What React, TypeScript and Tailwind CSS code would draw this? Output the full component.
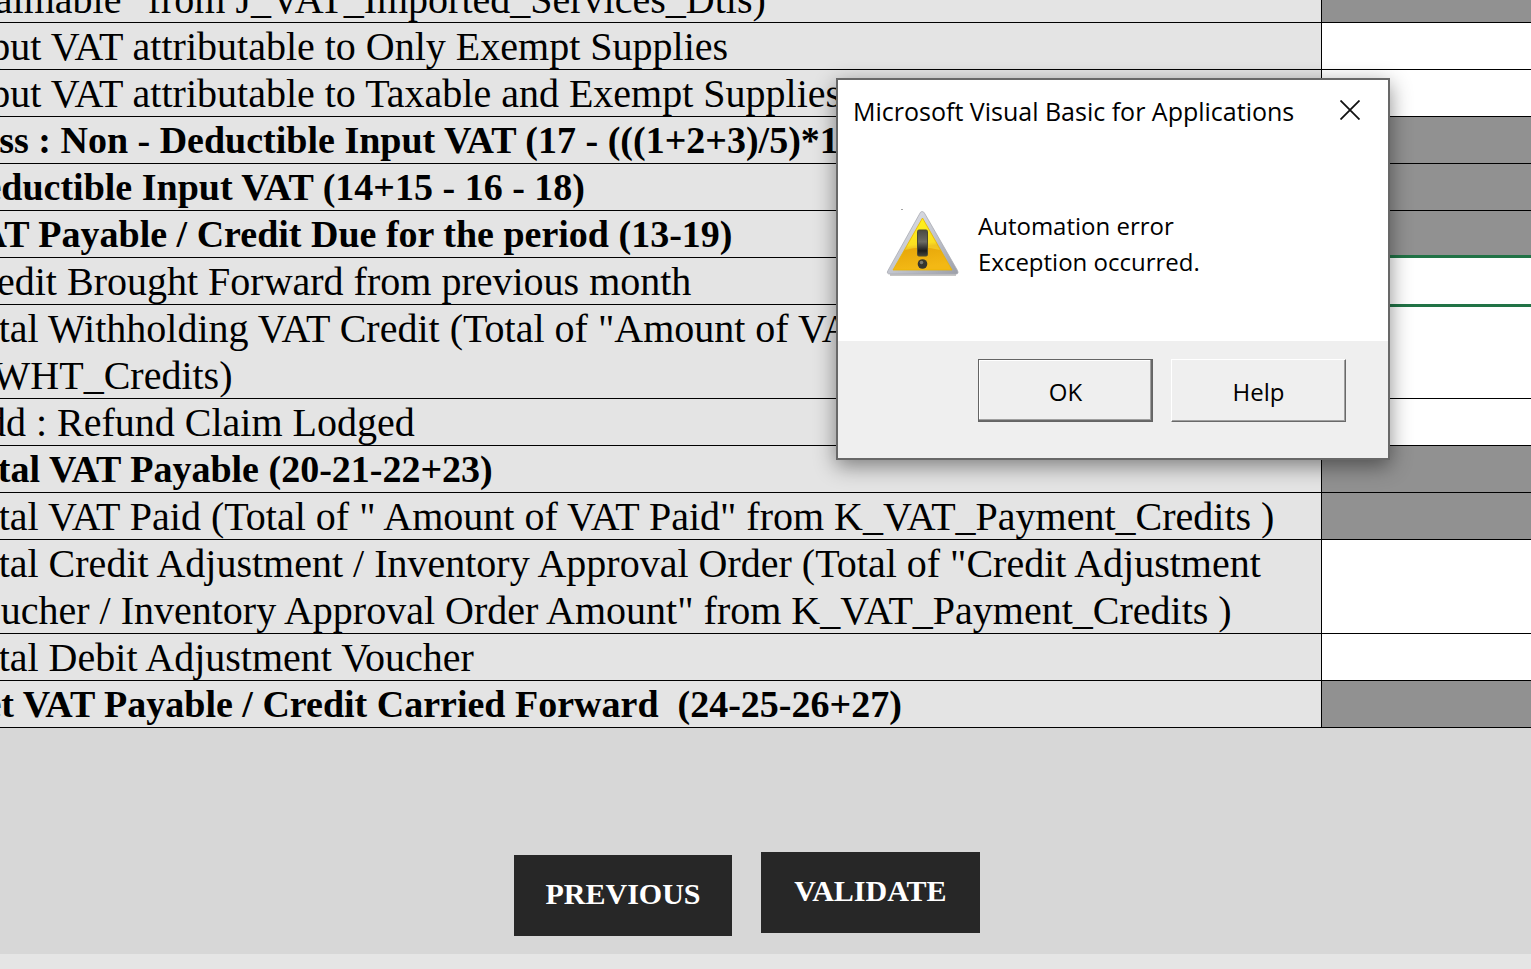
import React from "react";

type Fill = "gray" | "white" | "selected";

interface Row {
  lines: string[];
  bold?: boolean;
  fill: Fill;
}

const rows: Row[] = [
  { lines: ['Claimable" from J_VAT_Imported_Services_Dtls)'], fill: "gray" },
  { lines: ["Input VAT attributable to Only Exempt Supplies"], fill: "white" },
  { lines: ["Input VAT attributable to Taxable and Exempt Supplies"], fill: "white" },
  { lines: ["Less : Non - Deductible Input VAT (17 - (((1+2+3)/5)*17))"], bold: true, fill: "gray" },
  { lines: ["Deductible Input VAT (14+15 - 16 - 18)"], bold: true, fill: "gray" },
  { lines: ["VAT Payable / Credit Due for the period (13-19)"], bold: true, fill: "gray" },
  { lines: ["Credit Brought Forward from previous month"], fill: "selected" },
  { lines: ['Total Withholding VAT Credit (Total of "Amount of VAT" from', "J_WHT_Credits)"], fill: "white" },
  { lines: ["Add : Refund Claim Lodged"], fill: "white" },
  { lines: ["Total VAT Payable (20-21-22+23)"], bold: true, fill: "gray" },
  { lines: ['Total VAT Paid (Total of " Amount of VAT Paid" from K_VAT_Payment_Credits )'], fill: "gray" },
  {
    lines: [
      'Total Credit Adjustment / Inventory Approval Order (Total of "Credit Adjustment',
      'Voucher / Inventory Approval Order Amount" from K_VAT_Payment_Credits )',
    ],
    fill: "white",
  },
  { lines: ["Total Debit Adjustment Voucher"], fill: "white" },
  { lines: ["Net VAT Payable / Credit Carried Forward  (24-25-26+27)"], bold: true, fill: "gray" },
];

function WarningIcon() {
  return (
    <svg width="74" height="70" viewBox="0 0 74 70" aria-hidden="true" className="shrink-0">
      <defs>
        <linearGradient id="rim" x1="0" y1="0" x2="1" y2="1">
          <stop offset="0" stopColor="#e6e8ee" />
          <stop offset="0.5" stopColor="#c3c6cf" />
          <stop offset="1" stopColor="#9c9fa8" />
        </linearGradient>
        <linearGradient id="face" x1="0" y1="0" x2="0.15" y2="1">
          <stop offset="0" stopColor="#fff200" />
          <stop offset="0.55" stopColor="#f8d00c" />
          <stop offset="0.62" stopColor="#e8a80a" />
          <stop offset="1" stopColor="#f3b814" />
        </linearGradient>
        <linearGradient id="mark" x1="0" y1="0" x2="0" y2="1">
          <stop offset="0" stopColor="#4a4a42" />
          <stop offset="0.45" stopColor="#6b6b64" />
          <stop offset="0.8" stopColor="#1c1c1c" />
          <stop offset="1" stopColor="#44443c" />
        </linearGradient>
      </defs>
      <rect x="15" y="1" width="2" height="1" fill="#a5a5a5" />
      <path d="M4 67H70" stroke="#8d8d8d" strokeOpacity="0.5" strokeWidth="2" />
      <path d="M36 3.500Q38 3.500 39 6L71.500 62.500Q73 66 70 66H4Q0 66 2 62.500L33.500 6Q34.500 3.500 36 3.500Z" fill="url(#rim)" stroke="#a9abb3" strokeWidth="0.8" />
      <path d="M36.500 10L66 62H7Z" fill="url(#face)" stroke="#e8b400" strokeWidth="0.8" strokeLinejoin="round" />
      <path d="M36.500 11L54 42Q36 37 19 42Z" fill="#fffb4a" fillOpacity="0.35" />
      <rect x="31.500" y="22" width="10" height="26" rx="1.500" fill="url(#mark)" stroke="#4a4830" strokeWidth="1" />
      <circle cx="36.500" cy="56" r="4.800" fill="#35352f" />
      <circle cx="35.500" cy="54.500" r="1.800" fill="#77776f" />
    </svg>
  );
}

function Dialog() {
  return (
    <div
      role="dialog"
      aria-labelledby="dialog-title"
      className="absolute top-[78px] left-[836px] z-20 w-[554px] border-2 border-[#686868] bg-white font-['Open_Sans','Noto_Sans',sans-serif] text-2xl text-black shadow-[0_6px_20px_rgba(0,0,0,0.45)]"
    >
      <div className="flex h-16 items-center justify-between pr-7 pl-[15px]">
        <h1 id="dialog-title" className="text-[25px] whitespace-nowrap">
          Microsoft Visual Basic for Applications
        </h1>
        <button type="button" aria-label="Close" className="mb-1 flex size-5 items-center justify-center">
          <svg width="20" height="20" viewBox="0 0 20 20" aria-hidden="true">
            <path d="M0.500 0.500L19.500 19.500M19.500 0.500L0.500 19.500" stroke="#111" strokeWidth="1.800" />
          </svg>
        </button>
      </div>
      <div className="flex h-[197px] items-start gap-[18px] pt-16 pl-12">
        <WarningIcon />
        <p className="leading-9">
          Automation error
          <br />
          Exception occurred.
        </p>
      </div>
      <div className="flex justify-end gap-[18px] bg-[#efefef] pt-[18px] pr-[42px] pb-9">
        <button
          type="button"
          className="h-[63px] w-[175px] border border-[#646464] bg-[#efefef] pt-0.5 shadow-[inset_-1px_-1px_0_#696969,inset_-2px_-2px_0_#a0a0a0,inset_1px_1px_0_#fff]"
        >
          OK
        </button>
        <button
          type="button"
          className="h-[63px] w-[175px] border border-t-white border-r-[#696969] border-b-[#696969] border-l-white bg-[#efefef] pt-0.5 shadow-[inset_-1px_-1px_0_#a0a0a0]"
        >
          Help
        </button>
      </div>
    </div>
  );
}

export default function App() {
  return (
    <div className="relative flex min-h-screen flex-col overflow-hidden bg-[#e5e5e5] font-['Liberation_Serif',serif] text-black">
      <main className="bg-[#d7d7d7]">
        <table className="-mt-6 -ml-[43px] w-[calc(100%+43px)] table-fixed border-separate border-spacing-0">
          <colgroup>
            <col />
            <col className="w-[209px]" />
          </colgroup>
          <tbody>
            {rows.map((row) => (
              <tr key={row.lines[0]}>
                <th
                  scope="row"
                  className={
                    "border-r border-b border-black bg-[#e4e4e4] p-0 text-left whitespace-pre " +
                    (row.bold ? "text-[38px] leading-[46px] font-bold" : "text-[40px] leading-[48px] font-normal")
                  }
                >
                  {row.lines.map((line, i) => (
                    <div key={line} className={i > 0 ? "h-[46px]" : row.lines.length > 1 ? "h-[47px]" : "h-[46px]"}>
                      {line}
                    </div>
                  ))}
                </th>
                <td className={"relative border-b border-black p-0 " + (row.fill === "gray" ? "bg-[#919191]" : "bg-white")}>
                  {row.fill === "selected" && (
                    <div className="absolute inset-x-0 -top-[3px] -bottom-[3px] z-10 border-y-3 border-[#217346]" />
                  )}
                </td>
              </tr>
            ))}
          </tbody>
        </table>
        <div className="flex items-start gap-[29px] pt-[124px] pb-[18px] pl-[514px] text-3xl font-bold text-white">
          <button type="button" className="mt-[3px] h-[81px] w-[218px] bg-[#272727] pb-1">
            PREVIOUS
          </button>
          <button type="button" className="h-[81px] w-[219px] bg-[#272727] pb-1">
            VALIDATE
          </button>
        </div>
      </main>
      <Dialog />
    </div>
  );
}
